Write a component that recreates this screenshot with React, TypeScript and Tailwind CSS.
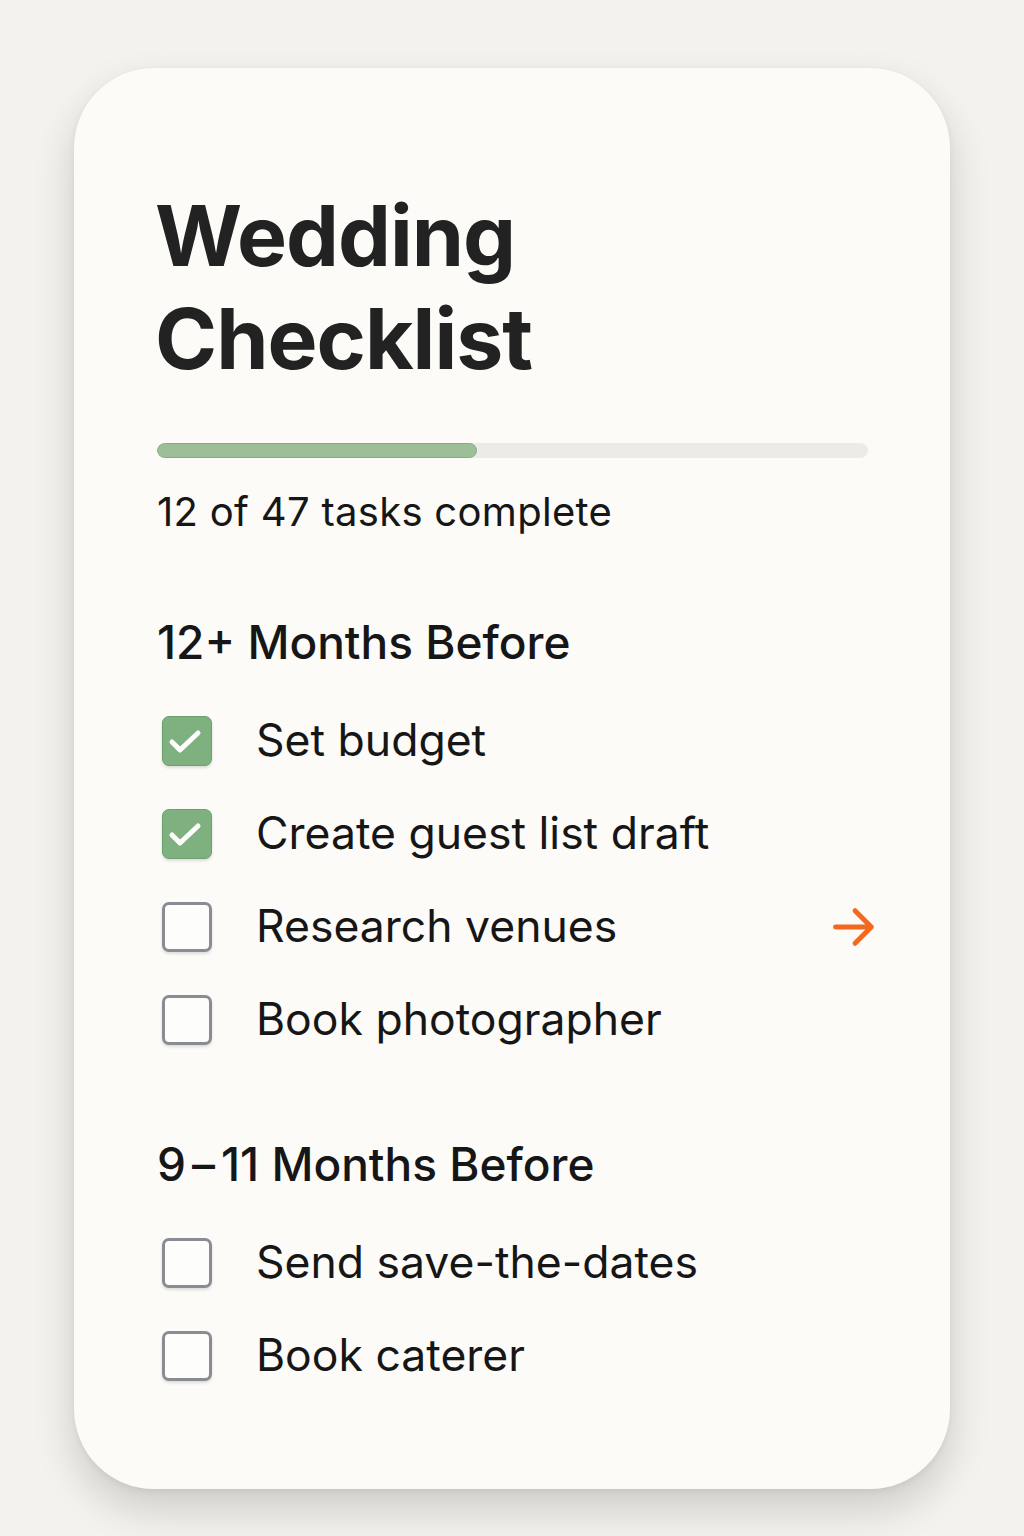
import React from "react";

const Box = ({ checked }: { checked: boolean }) =>
  checked ? (
    <div className="relative w-[50px] h-[50px] rounded-[7px] bg-[#7fb07f] border border-[#6e9f6e] shadow-[0_2px_3px_rgba(0,0,0,0.12)] shrink-0">
      <svg width="50" height="50" viewBox="0 0 50 50" fill="none" stroke="white" strokeWidth="5" strokeLinecap="round" strokeLinejoin="round" className="absolute -left-px -top-px">
        <path d="M10 26l8 8 18-17" />
      </svg>
    </div>
  ) : (
    <div className="w-[50px] h-[50px] rounded-[7px] bg-[#fdfdfc] border-[3px] border-[#8a8b93] shadow-[0_2px_3px_rgba(0,0,0,0.12)] shrink-0" />
  );

const Item = ({ label, checked, arrow }: { label: string; checked?: boolean; arrow?: boolean }) => (
  <div className="flex items-center h-[93px] pl-[5px]">
    <Box checked={!!checked} />
    <span className="ml-[44px] text-[44.5px] text-[#161616] flex-1">{label}</span>
    {arrow && (
      <svg width="52" height="52" viewBox="0 0 24 24" fill="none" stroke="#f36a1e" strokeWidth="2.3" strokeLinecap="round" strokeLinejoin="round" className="mr-[-12px]">
        <path d="M3.5 12h16.5M12.5 4.5l7.5 7.5-7.5 7.5" />
      </svg>
    )}
  </div>
);

export default function App() {
  return (
    <div className="min-h-[1536px] bg-[#f3f2ef] pt-[68px] pb-[47px] font-['Inter',sans-serif]">
      <div className="mx-auto w-[876px] h-[1421px] rounded-[80px] bg-[#fcfbf8] shadow-[0_20px_40px_rgba(0,0,0,0.16),0_2px_6px_rgba(0,0,0,0.06)] pl-[83px] pr-[82px] pt-[116px]">
        <h1 className="text-[84px] leading-[103px] font-bold text-[#222] tracking-[-1px] -ml-[2px]">
          Wedding
          <br />
          Checklist
        </h1>
        <div className="mt-[53px] h-[15px] rounded-full bg-[#ecebe8] overflow-hidden">
          <div className="h-full w-[45%] rounded-full bg-[#9dbf98] border border-[#85ad80]" />
        </div>
        <p className="mt-[29px] text-[40px] leading-[50px] text-[#161616] tracking-[0.3px]">12 of 47 tasks complete</p>
        <h2 className="mt-[77px] text-[46px] leading-[56px] font-medium text-[#161616]">12+ Months Before</h2>
        <div className="mt-[24px]">
          <Item label="Set budget" checked />
          <Item label="Create guest list draft" checked />
          <Item label="Research venues" arrow />
          <Item label="Book photographer" />
        </div>
        <h2 className="mt-[70px] text-[46px] leading-[56px] font-medium text-[#161616]">
          9<span className="mx-[6px]">–</span>11 Months Before
        </h2>
        <div className="mt-[24px]">
          <Item label="Send save-the-dates" />
          <Item label="Book caterer" />
        </div>
      </div>
    </div>
  );
}
